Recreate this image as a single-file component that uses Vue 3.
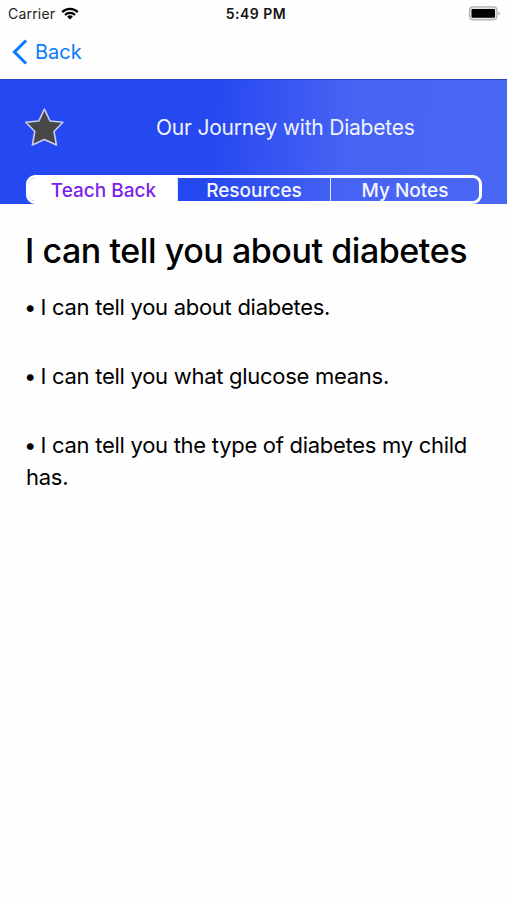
<script setup>
import { ref } from 'vue'

const tabs = ['Teach Back', 'Resources', 'My Notes']
const active = ref(0)
const points = [
  'I can tell you about diabetes.',
  'I can tell you what glucose means.',
  'I can tell you the type of diabetes my child has.',
]
</script>

<template>
  <div class="screen">
    <div class="status">
      <div class="carrier">
        <span class="carrier-name">Carrier</span>
        <svg class="wifi" width="18" height="13" viewBox="0 0 18 13">
          <g fill="none" stroke="#000" stroke-width="2.3">
            <path d="M1.2 5.1A11 11 0 0 1 16.8 5.1" />
            <path d="M4 8A7.1 7.1 0 0 1 14 8" />
          </g>
          <path d="M9 12.6L6.1 9.7A4.1 4.1 0 0 1 11.9 9.7Z" />
        </svg>
      </div>
      <span class="time">5:49 PM</span>
      <svg class="battery" width="33" height="16" viewBox="0 0 33 16">
        <rect x="1.5" y="0.8" width="27.5" height="13" rx="3.5" fill="#e4e4e4" stroke="#b0b0b0" stroke-width="1.2" />
        <rect x="3.5" y="2.9" width="23.5" height="8.8" rx="1" />
        <path d="M30.5 5.4Q33 7.3 30.5 9.2Z" fill="#999" />
      </svg>
    </div>

    <nav class="nav">
      <svg class="chevron" width="16" height="26" viewBox="0 0 16 26">
        <path d="M14 1.5L2.5 13L14 24.5" fill="none" stroke="#0a7cff" stroke-width="3.1" />
      </svg>
      <span class="back">Back</span>
    </nav>

    <header class="banner">
      <div class="title-row">
        <svg class="star" width="41" height="40" viewBox="0 0 41 40">
          <path
            d="M20.4 2.2L26 14L38.9 15.2L30 24.5L32.4 38L20.4 32.6L8.4 38L10.8 24.5L1.9 15.2L14.8 14Z"
            fill="#484848" stroke="#c9cdf0" stroke-width="1.6" stroke-linejoin="round"
          />
        </svg>
        <span class="title">Our Journey with Diabetes</span>
      </div>
      <div class="tabs">
        <button
          v-for="(tab, i) in tabs" :key="tab" class="tab"
          :class="{ active: active === i }" @click="active = i"
        >{{ tab }}</button>
      </div>
    </header>

    <main class="content">
      <h1>I can tell you about diabetes</h1>
      <p v-for="p in points" :key="p"><span class="bullet">•</span>{{ p }}</p>
    </main>
  </div>
</template>

<style>
body {
  margin: 0;
  background: #fff;
}
</style>

<style scoped>
.screen {
  width: 507px;
  height: 900px;
  overflow: hidden;
  background: #fefefe;
  color: #000;
  font-family: Inter, "Liberation Sans", sans-serif;
}
.status {
  display: grid;
  grid-template-columns: 1fr auto 1fr;
  align-items: center;
  height: 27px;
  padding: 0 6px 0 8px;
  box-sizing: border-box;
}
.carrier {
  display: flex;
  align-items: center;
  gap: 6px;
  font-size: 14px;
  letter-spacing: 0.2px;
  color: #222;
}
.time {
  padding-left: 3px;
  font-size: 14px;
  font-weight: 600;
  letter-spacing: 0.5px;
  color: #151515;
}
.battery {
  justify-self: end;
}
.nav {
  display: flex;
  align-items: center;
  gap: 7px;
  height: 50px;
  padding-left: 12px;
  color: #0a7cff;
  font-size: 20px;
}
.banner {
  height: 125px;
  margin-top: 2px;
  padding: 0 25px 0 26px;
  box-sizing: border-box;
  background: linear-gradient(95deg, #2648f0 42%, #4763f4 68%, #4b67f5 100%);
  box-shadow: inset 0 1px #2745c4;
}
.title-row {
  display: flex;
  align-items: center;
  height: 96px;
}
.star {
  margin-left: -2px;
}
.title {
  margin: 1px 0 0 91px;
  color: #f0f2ff;
  font-size: 21px;
  letter-spacing: -0.22px;
  white-space: nowrap;
}
.tabs {
  display: grid;
  grid-template-columns: 148px 153px 1fr;
  height: 29px;
  box-sizing: border-box;
  border: 3px solid #fff;
  border-radius: 9px;
  overflow: hidden;
}
.tab {
  display: flex;
  align-items: center;
  justify-content: center;
  padding: 2px 0 0;
  border: 0;
  border-left: 1px solid #dfe4ff;
  background: none;
  color: #f4f6ff;
  font: 500 19px/21px Inter, "Liberation Sans", sans-serif;
  white-space: nowrap;
}
.tab.active {
  background: #fff;
  border-left-color: #fff;
  color: #7a24ea;
}
.content {
  padding: 25px 26px 0;
}
h1 {
  margin: 0 0 18px -1px;
  font-size: 34px;
  font-weight: 500;
  line-height: 44px;
  letter-spacing: -0.44px;
  white-space: nowrap;
}
p {
  margin: 0 -10px 37px 0;
  font-size: 22px;
  line-height: 32px;
  letter-spacing: -0.28px;
}
.bullet {
  display: inline-block;
  width: 16.5px;
  margin-left: -2px;
  line-height: 20px;
}
</style>
